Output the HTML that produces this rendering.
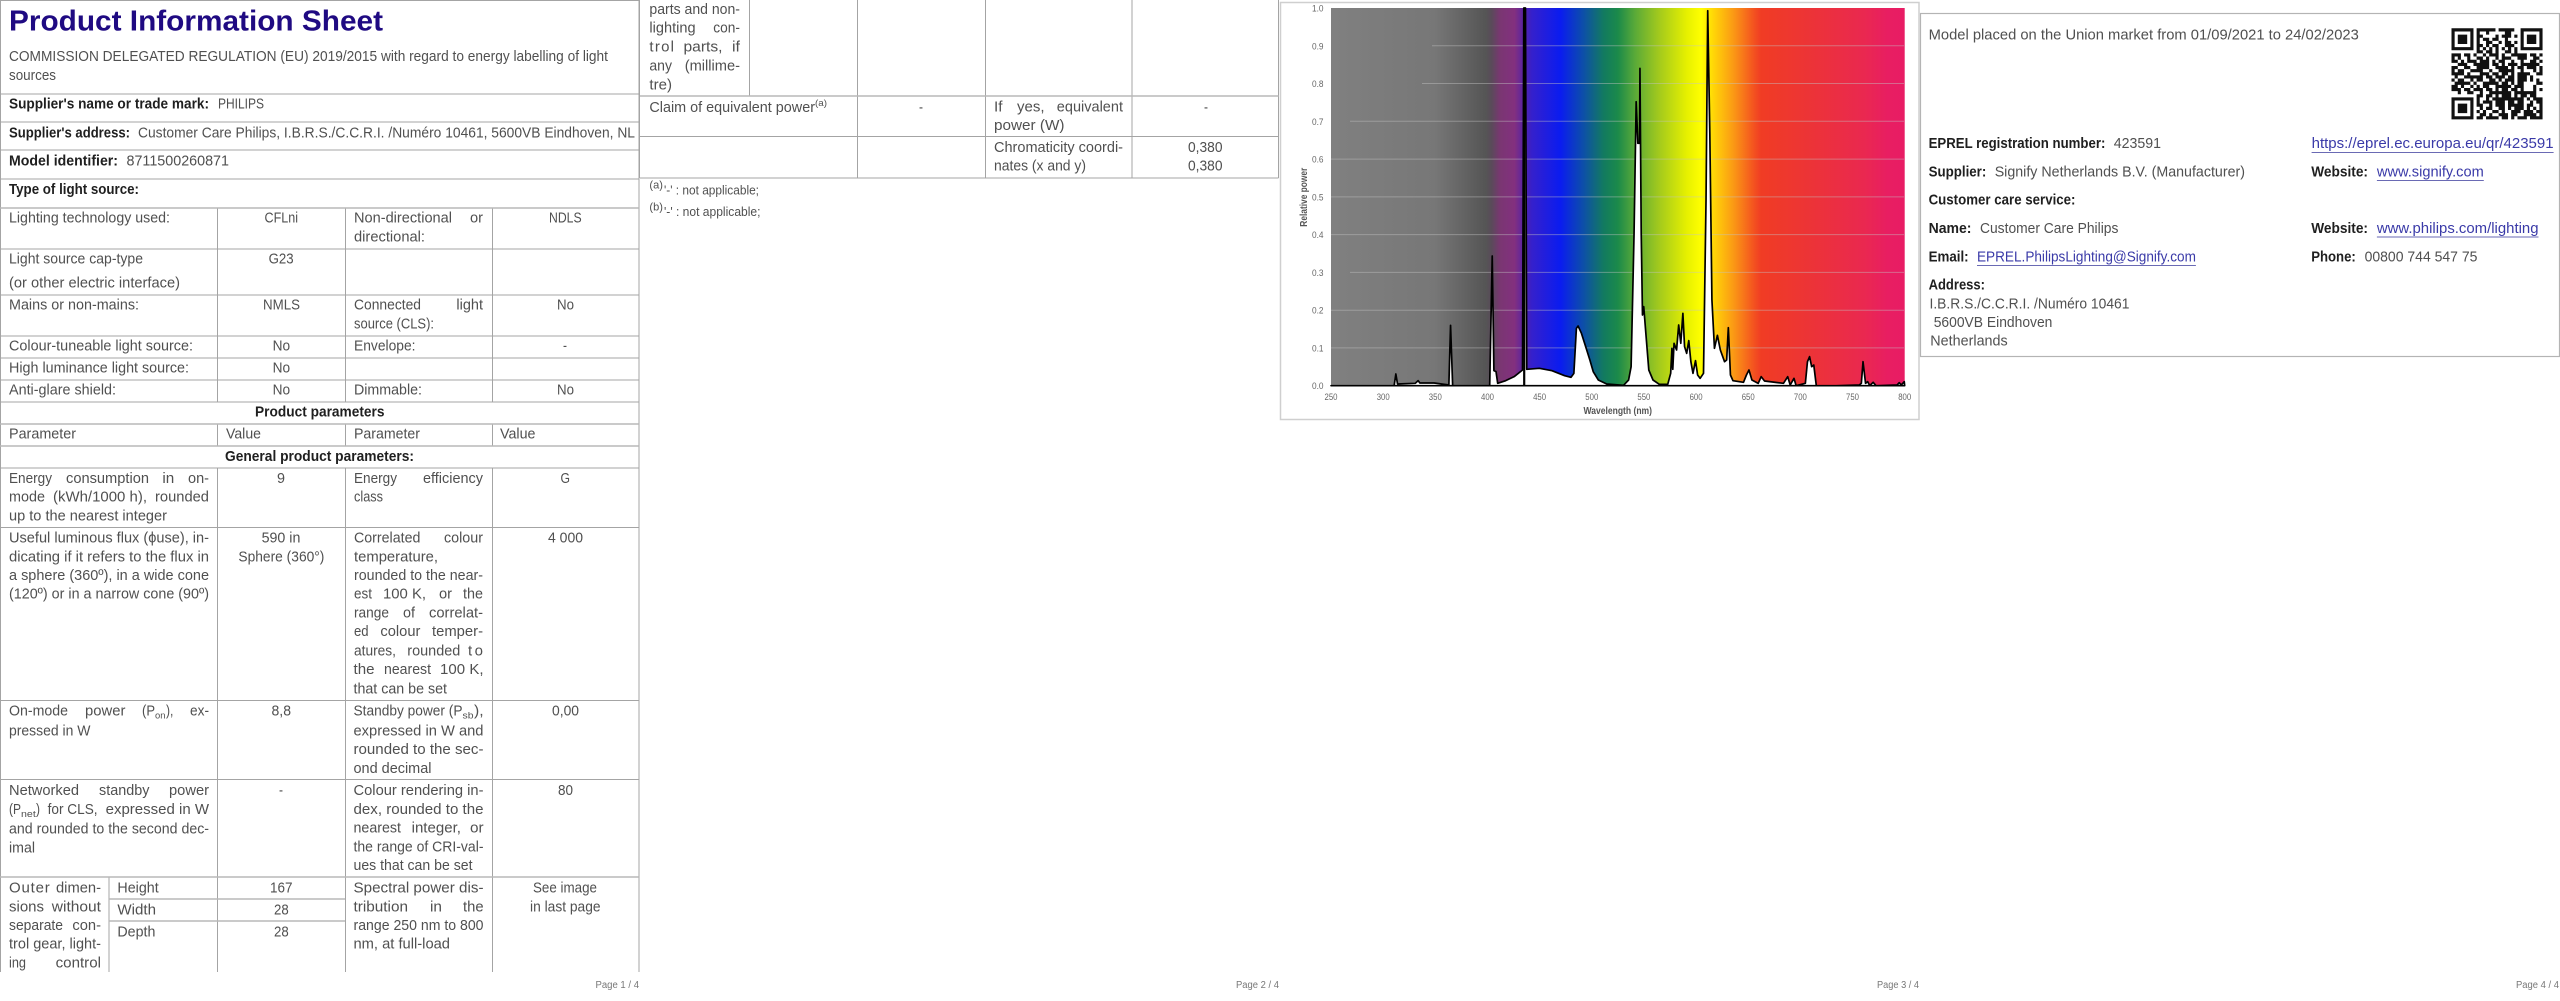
<!DOCTYPE html>
<html><head><meta charset="utf-8"><title>Product Information Sheet</title>
<style>
html,body{margin:0;padding:0;background:#fff;width:2560px;height:1001px;overflow:hidden}
svg{display:block;filter:blur(.35px)}
text{font-family:"Liberation Sans",sans-serif;font-size:15px;fill:#505050}
.b{font-weight:bold;fill:#1f1f1f}
.k{fill:#3a3aa8}
.s{font-size:9px;fill:#666}
.p{font-size:10px;fill:#777}
.m{font-size:10px;font-weight:bold;fill:#555}
</style></head><body>
<svg xmlns="http://www.w3.org/2000/svg" width="2560" height="1001" viewBox="0 0 2560 1001">
<defs>
<linearGradient id="sp" gradientUnits="userSpaceOnUse" x1="1331" y1="0" x2="1904.7" y2="0">
<stop offset="0" stop-color="#808080"/><stop offset=".18" stop-color="#777"/><stop offset=".27" stop-color="#555"/>
<stop offset=".28" stop-color="#5a4a5a"/><stop offset=".295" stop-color="#7a3672"/><stop offset=".32" stop-color="#83307f"/>
<stop offset=".335" stop-color="#5a24a0"/><stop offset=".35" stop-color="#3520cc"/><stop offset=".40" stop-color="#0a1cf0"/>
<stop offset=".44" stop-color="#0d4fa8"/><stop offset=".475" stop-color="#127a60"/><stop offset=".50" stop-color="#1b8a4a"/>
<stop offset=".53" stop-color="#5aaa38"/><stop offset=".57" stop-color="#a0c81e"/><stop offset=".62" stop-color="#e6f000"/>
<stop offset=".645" stop-color="#ffff00"/><stop offset=".67" stop-color="#ffd008"/><stop offset=".70" stop-color="#fb9c14"/>
<stop offset=".735" stop-color="#f4561f"/><stop offset=".75" stop-color="#f03c24"/><stop offset=".84" stop-color="#ec3338"/>
<stop offset=".93" stop-color="#ea2850"/><stop offset=".97" stop-color="#e81e62"/><stop offset="1" stop-color="#e81c64"/>
</linearGradient>
</defs>

<!-- table lines page 1 -->
<path fill="none" stroke="#a4a4a4" stroke-width="1" d="M.5 0V972M639 0V972M0 .5H639M0 94H639M0 122H639M0 150H639M0 179H639M0 249H639M0 295H639M0 336H639M0 358H639M0 380H639M0 402H639M0 468H639M0 527.5H639M0 700.5H639M0 779.5H639M217.5 208V402M345.5 208V402M492.5 208V402M217.5 424V446M345.5 424V446M492.5 424V446M217.5 468V972M345.5 468V972M492.5 468V972M109 877V972"/>
<path fill="none" stroke="#b8b8b8" stroke-width="1.6" d="M0 208H639M0 424H639M0 446H639M0 877H639M109 899H345M109 921H345"/>
<!-- table lines page 2 -->
<path fill="none" stroke="#a4a4a4" stroke-width="1" d="M639.5 0V178M749.5 0V96M857.5 0V178M985.5 0V178M1132 0V178M1278.5 0V178M640 136.5H1278.5M640 178H1278.5"/>
<path fill="none" stroke="#b8b8b8" stroke-width="1.6" d="M640 96H1278.5"/>

<!-- page 1 text -->
<text x="9" y="30.7" textLength="374" lengthAdjust="spacingAndGlyphs" style="font-size:29px;font-weight:bold;fill:#1f0a82">Product Information Sheet</text>
<text x="9" y="61" textLength="599" lengthAdjust="spacingAndGlyphs">COMMISSION DELEGATED REGULATION (EU) 2019/2015 with regard to energy labelling of light</text>
<text x="9" y="80" textLength="47" lengthAdjust="spacingAndGlyphs">sources</text>
<text class="b" x="9" y="108.7" textLength="200" lengthAdjust="spacingAndGlyphs">Supplier's name or trade mark:</text>
<text x="218" y="108.7" textLength="46" lengthAdjust="spacingAndGlyphs">PHILIPS</text>
<text class="b" x="9" y="137.3" textLength="121" lengthAdjust="spacingAndGlyphs">Supplier's address:</text>
<text x="138" y="137.3" textLength="497" lengthAdjust="spacingAndGlyphs">Customer Care Philips, I.B.R.S./C.C.R.I. /Numéro 10461, 5600VB Eindhoven, NL</text>
<text class="b" x="9" y="165.7" textLength="109" lengthAdjust="spacingAndGlyphs">Model identifier:</text>
<text x="126.5" y="165.7" textLength="102.5" lengthAdjust="spacingAndGlyphs">8711500260871</text>
<text class="b" x="9" y="194" textLength="130" lengthAdjust="spacingAndGlyphs">Type of light source:</text>

<text x="9" y="222.7" textLength="161" lengthAdjust="spacingAndGlyphs">Lighting technology used:</text>
<text x="264.5" y="222.7" textLength="33.5" lengthAdjust="spacingAndGlyphs">CFLni</text>
<text x="354" y="222.7" textLength="98" lengthAdjust="spacingAndGlyphs">Non-directional</text>
<text x="470" y="222.7" textLength="13" lengthAdjust="spacingAndGlyphs">or</text>
<text x="354" y="241.7" textLength="71" lengthAdjust="spacingAndGlyphs">directional:</text>
<text x="549" y="222.7" textLength="32.6" lengthAdjust="spacingAndGlyphs">NDLS</text>

<text x="9" y="263.3" textLength="134" lengthAdjust="spacingAndGlyphs">Light source cap-type</text>
<text x="268.6" y="263.3" textLength="25" lengthAdjust="spacingAndGlyphs">G23</text>
<text x="9" y="287.3" textLength="171" lengthAdjust="spacingAndGlyphs">(or other electric interface)</text>

<text x="9" y="309.7" textLength="130" lengthAdjust="spacingAndGlyphs">Mains or non-mains:</text>
<text x="263" y="309.7" textLength="37" lengthAdjust="spacingAndGlyphs">NMLS</text>
<text x="354" y="309.7" textLength="67" lengthAdjust="spacingAndGlyphs">Connected</text>
<text x="456.4" y="309.7" textLength="26.6" lengthAdjust="spacingAndGlyphs">light</text>
<text x="354" y="328.3" textLength="80" lengthAdjust="spacingAndGlyphs">source (CLS):</text>
<text x="557" y="309.7" textLength="17" lengthAdjust="spacingAndGlyphs">No</text>

<text x="9" y="350.7" textLength="184" lengthAdjust="spacingAndGlyphs">Colour-tuneable light source:</text>
<text x="272.6" y="350.7" textLength="17.5" lengthAdjust="spacingAndGlyphs">No</text>
<text x="354" y="350.7" textLength="61.5" lengthAdjust="spacingAndGlyphs">Envelope:</text>
<text x="563" y="350.7" textLength="4" lengthAdjust="spacingAndGlyphs">-</text>
<text x="9" y="372.7" textLength="180" lengthAdjust="spacingAndGlyphs">High luminance light source:</text>
<text x="272.6" y="372.7" textLength="17.5" lengthAdjust="spacingAndGlyphs">No</text>
<text x="9" y="394.7" textLength="107" lengthAdjust="spacingAndGlyphs">Anti-glare shield:</text>
<text x="272.6" y="394.7" textLength="17.5" lengthAdjust="spacingAndGlyphs">No</text>
<text x="354" y="394.7" textLength="68" lengthAdjust="spacingAndGlyphs">Dimmable:</text>
<text x="557" y="394.7" textLength="17" lengthAdjust="spacingAndGlyphs">No</text>

<text class="b" x="255" y="416.7" textLength="129.5" lengthAdjust="spacingAndGlyphs">Product parameters</text>
<text x="9" y="438.7" textLength="67" lengthAdjust="spacingAndGlyphs">Parameter</text>
<text x="226" y="438.7" textLength="35" lengthAdjust="spacingAndGlyphs">Value</text>
<text x="354" y="438.7" textLength="66" lengthAdjust="spacingAndGlyphs">Parameter</text>
<text x="500" y="438.7" textLength="35.5" lengthAdjust="spacingAndGlyphs">Value</text>
<text class="b" x="225" y="461" textLength="189" lengthAdjust="spacingAndGlyphs">General product parameters:</text>

<text x="9" y="483" textLength="43" lengthAdjust="spacingAndGlyphs">Energy</text>
<text x="66" y="483" textLength="83" lengthAdjust="spacingAndGlyphs">consumption</text>
<text x="162.4" y="483" textLength="11.9" lengthAdjust="spacingAndGlyphs">in</text>
<text x="188" y="483" textLength="21" lengthAdjust="spacingAndGlyphs">on-</text>
<text x="9" y="501.7" textLength="36" lengthAdjust="spacingAndGlyphs">mode</text>
<text x="53" y="501.7" textLength="94" lengthAdjust="spacingAndGlyphs">(kWh/1000 h),</text>
<text x="155" y="501.7" textLength="54" lengthAdjust="spacingAndGlyphs">rounded</text>
<text x="9" y="520.3" textLength="158" lengthAdjust="spacingAndGlyphs">up to the nearest integer</text>
<text x="277" y="483" textLength="8" lengthAdjust="spacingAndGlyphs">9</text>
<text x="354" y="483" textLength="43" lengthAdjust="spacingAndGlyphs">Energy</text>
<text x="423" y="483" textLength="60" lengthAdjust="spacingAndGlyphs">efficiency</text>
<text x="354" y="501.7" textLength="29" lengthAdjust="spacingAndGlyphs">class</text>
<text x="560.5" y="483" textLength="9.5" lengthAdjust="spacingAndGlyphs">G</text>

<text x="9" y="542.7" textLength="200" lengthAdjust="spacingAndGlyphs">Useful luminous flux (ϕuse), in-</text>
<text x="9" y="561.3" textLength="200" lengthAdjust="spacingAndGlyphs">dicating if it refers to the flux in</text>
<text x="9" y="580" textLength="200" lengthAdjust="spacingAndGlyphs">a sphere (360º), in a wide cone</text>
<text x="9" y="598.7" textLength="200" lengthAdjust="spacingAndGlyphs">(120º) or in a narrow cone (90º)</text>
<text x="261.6" y="542.7" textLength="38.8" lengthAdjust="spacingAndGlyphs">590 in</text>
<text x="238.4" y="561.3" textLength="86" lengthAdjust="spacingAndGlyphs">Sphere (360°)</text>
<text x="354" y="542.7" textLength="66.4" lengthAdjust="spacingAndGlyphs">Correlated</text>
<text x="444" y="542.7" textLength="39" lengthAdjust="spacingAndGlyphs">colour</text>
<text x="354" y="561.3" textLength="84" lengthAdjust="spacingAndGlyphs">temperature,</text>
<text x="354" y="580" textLength="129" lengthAdjust="spacingAndGlyphs">rounded to the near-</text>
<text x="354" y="598.7" textLength="18" lengthAdjust="spacingAndGlyphs">est</text>
<text x="383" y="598.7" textLength="43" lengthAdjust="spacingAndGlyphs">100 K,</text>
<text x="439" y="598.7" textLength="13" lengthAdjust="spacingAndGlyphs">or</text>
<text x="463" y="598.7" textLength="20" lengthAdjust="spacingAndGlyphs">the</text>
<text x="354" y="617.3" textLength="35" lengthAdjust="spacingAndGlyphs">range</text>
<text x="403" y="617.3" textLength="12" lengthAdjust="spacingAndGlyphs">of</text>
<text x="429" y="617.3" textLength="54" lengthAdjust="spacingAndGlyphs">correlat-</text>
<text x="354" y="636" textLength="14.6" lengthAdjust="spacingAndGlyphs">ed</text>
<text x="380.4" y="636" textLength="40" lengthAdjust="spacingAndGlyphs">colour</text>
<text x="432" y="636" textLength="51" lengthAdjust="spacingAndGlyphs">temper-</text>
<text x="354" y="655.3" textLength="42" lengthAdjust="spacingAndGlyphs">atures,</text>
<text x="407.3" y="655.3" textLength="53" lengthAdjust="spacingAndGlyphs">rounded</text>
<text x="468" y="655.3" textLength="15" lengthAdjust="spacing">to</text>
<text x="353.5" y="674" textLength="21" lengthAdjust="spacingAndGlyphs">the</text>
<text x="384" y="674" textLength="47" lengthAdjust="spacingAndGlyphs">nearest</text>
<text x="440" y="674" textLength="43.6" lengthAdjust="spacing">100 K,</text>
<text x="353.5" y="693.3" textLength="93.5" lengthAdjust="spacingAndGlyphs">that can be set</text>
<text x="548" y="542.7" textLength="35" lengthAdjust="spacingAndGlyphs">4 000</text>

<text x="9" y="715.3" textLength="59" lengthAdjust="spacingAndGlyphs">On-mode</text>
<text x="85" y="715.3" textLength="40.4" lengthAdjust="spacingAndGlyphs">power</text>
<text x="142" y="715.3" textLength="13" lengthAdjust="spacingAndGlyphs">(P</text>
<text x="155" y="718.3" textLength="10.5" lengthAdjust="spacingAndGlyphs" style="font-size:9.5px">on</text>
<text x="166" y="715.3" textLength="7.4" lengthAdjust="spacingAndGlyphs">),</text>
<text x="190" y="715.3" textLength="19" lengthAdjust="spacingAndGlyphs">ex-</text>
<text x="9" y="735.3" textLength="81.5" lengthAdjust="spacingAndGlyphs">pressed in W</text>
<text x="271.5" y="715.3" textLength="19.5" lengthAdjust="spacingAndGlyphs">8,8</text>
<text x="353.5" y="715.3" textLength="109" lengthAdjust="spacingAndGlyphs">Standby power (P</text>
<text x="462.5" y="718.3" textLength="11" lengthAdjust="spacingAndGlyphs" style="font-size:9.5px">sb</text>
<text x="474" y="715.3" textLength="9.6" lengthAdjust="spacingAndGlyphs">),</text>
<text x="353.5" y="735.3" textLength="130" lengthAdjust="spacingAndGlyphs">expressed in W and</text>
<text x="353.5" y="754" textLength="130" lengthAdjust="spacingAndGlyphs">rounded to the sec-</text>
<text x="353.5" y="773" textLength="78" lengthAdjust="spacingAndGlyphs">ond decimal</text>
<text x="552" y="715.3" textLength="27" lengthAdjust="spacingAndGlyphs">0,00</text>

<text x="9" y="795" textLength="70" lengthAdjust="spacingAndGlyphs">Networked</text>
<text x="99" y="795" textLength="50.4" lengthAdjust="spacingAndGlyphs">standby</text>
<text x="169" y="795" textLength="40" lengthAdjust="spacingAndGlyphs">power</text>
<text x="9" y="814" textLength="12" lengthAdjust="spacingAndGlyphs">(P</text>
<text x="21" y="817" textLength="14.8" lengthAdjust="spacingAndGlyphs" style="font-size:9.5px">net</text>
<text x="36" y="814" textLength="4" lengthAdjust="spacingAndGlyphs">)</text>
<text x="47.6" y="814" textLength="50" lengthAdjust="spacingAndGlyphs">for CLS,</text>
<text x="105.6" y="814" textLength="103.4" lengthAdjust="spacingAndGlyphs">expressed in W</text>
<text x="9" y="833.3" textLength="200" lengthAdjust="spacingAndGlyphs">and rounded to the second dec-</text>
<text x="9" y="852.3" textLength="26" lengthAdjust="spacingAndGlyphs">imal</text>
<text x="279" y="795" textLength="4" lengthAdjust="spacingAndGlyphs">-</text>
<text x="353.5" y="795" textLength="130" lengthAdjust="spacingAndGlyphs">Colour rendering in-</text>
<text x="353.5" y="814" textLength="130" lengthAdjust="spacingAndGlyphs">dex, rounded to the</text>
<text x="353.5" y="832.7" textLength="47.5" lengthAdjust="spacingAndGlyphs">nearest</text>
<text x="411.6" y="832.7" textLength="49.4" lengthAdjust="spacingAndGlyphs">integer,</text>
<text x="470" y="832.7" textLength="13.6" lengthAdjust="spacingAndGlyphs">or</text>
<text x="353.5" y="851.3" textLength="130" lengthAdjust="spacingAndGlyphs">the range of CRI-val-</text>
<text x="353.5" y="870" textLength="119" lengthAdjust="spacingAndGlyphs">ues that can be set</text>
<text x="558" y="795" textLength="15" lengthAdjust="spacingAndGlyphs">80</text>

<text x="9" y="892.3" textLength="40.7" lengthAdjust="spacing">Outer</text>
<text x="56" y="892.3" textLength="45" lengthAdjust="spacingAndGlyphs">dimen-</text>
<text x="9" y="911.3" textLength="35" lengthAdjust="spacingAndGlyphs">sions</text>
<text x="51.8" y="911.3" textLength="49.2" lengthAdjust="spacingAndGlyphs">without</text>
<text x="9" y="930" textLength="54" lengthAdjust="spacingAndGlyphs">separate</text>
<text x="72.4" y="930" textLength="28.6" lengthAdjust="spacingAndGlyphs">con-</text>
<text x="9" y="948.7" textLength="92" lengthAdjust="spacingAndGlyphs">trol gear, light-</text>
<text x="9" y="967.7" textLength="17" lengthAdjust="spacingAndGlyphs">ing</text>
<text x="55.6" y="967.7" textLength="45.4" lengthAdjust="spacingAndGlyphs">control</text>
<text x="117.4" y="892.3" textLength="41.3" lengthAdjust="spacingAndGlyphs">Height</text>
<text x="117.4" y="914.3" textLength="38.6" lengthAdjust="spacingAndGlyphs">Width</text>
<text x="117.4" y="936.3" textLength="38" lengthAdjust="spacingAndGlyphs">Depth</text>
<text x="270" y="892.3" textLength="22.5" lengthAdjust="spacingAndGlyphs">167</text>
<text x="274" y="914.3" textLength="14.7" lengthAdjust="spacingAndGlyphs">28</text>
<text x="274" y="936.3" textLength="14.7" lengthAdjust="spacingAndGlyphs">28</text>
<text x="353.5" y="892.3" textLength="130" lengthAdjust="spacingAndGlyphs">Spectral power dis-</text>
<text x="353.5" y="911.3" textLength="54.5" lengthAdjust="spacingAndGlyphs">tribution</text>
<text x="430" y="911.3" textLength="12" lengthAdjust="spacingAndGlyphs">in</text>
<text x="463" y="911.3" textLength="20.6" lengthAdjust="spacingAndGlyphs">the</text>
<text x="353.5" y="930" textLength="130" lengthAdjust="spacingAndGlyphs">range 250 nm to 800</text>
<text x="353.5" y="948.7" textLength="96.5" lengthAdjust="spacingAndGlyphs">nm, at full-load</text>
<text x="533" y="892.3" textLength="64" lengthAdjust="spacingAndGlyphs">See image</text>
<text x="530" y="911.3" textLength="70.6" lengthAdjust="spacingAndGlyphs">in last page</text>
<text class="p" x="595.5" y="988" textLength="43.5" lengthAdjust="spacingAndGlyphs">Page 1 / 4</text>

<!-- page 2 text -->
<text x="649.4" y="14" textLength="90.6" lengthAdjust="spacingAndGlyphs">parts and non-</text>
<text x="649.4" y="32.7" textLength="46.2" lengthAdjust="spacingAndGlyphs">lighting</text>
<text x="713.3" y="32.7" textLength="26.7" lengthAdjust="spacingAndGlyphs">con-</text>
<text x="649.4" y="51.3" textLength="24.6" lengthAdjust="spacing">trol</text>
<text x="683.5" y="51.3" textLength="39" lengthAdjust="spacingAndGlyphs">parts,</text>
<text x="732" y="51.3" textLength="8" lengthAdjust="spacingAndGlyphs">if</text>
<text x="649.4" y="70.3" textLength="22.6" lengthAdjust="spacingAndGlyphs">any</text>
<text x="684.7" y="70.3" textLength="55.3" lengthAdjust="spacingAndGlyphs">(millime-</text>
<text x="649.4" y="89.3" textLength="22.6" lengthAdjust="spacingAndGlyphs">tre)</text>
<text x="649.4" y="112" textLength="165.6" lengthAdjust="spacingAndGlyphs">Claim of equivalent power</text>
<text x="815" y="106" textLength="12" lengthAdjust="spacingAndGlyphs" style="font-size:9.5px">(a)</text>
<text x="919" y="112" textLength="4" lengthAdjust="spacingAndGlyphs">-</text>
<text x="994" y="111.3" textLength="8.5" lengthAdjust="spacingAndGlyphs">If</text>
<text x="1017" y="111.3" textLength="27.6" lengthAdjust="spacingAndGlyphs">yes,</text>
<text x="1056.8" y="111.3" textLength="66.2" lengthAdjust="spacingAndGlyphs">equivalent</text>
<text x="994" y="130" textLength="70.5" lengthAdjust="spacingAndGlyphs">power (W)</text>
<text x="1204" y="112" textLength="4" lengthAdjust="spacingAndGlyphs">-</text>
<text x="994" y="152" textLength="129" lengthAdjust="spacingAndGlyphs">Chromaticity coordi-</text>
<text x="994" y="170.7" textLength="92" lengthAdjust="spacingAndGlyphs">nates (x and y)</text>
<text x="1188" y="152" textLength="34.5" lengthAdjust="spacingAndGlyphs">0,380</text>
<text x="1188" y="170.7" textLength="34.5" lengthAdjust="spacingAndGlyphs">0,380</text>
<text x="649.4" y="188.7" textLength="13.5" lengthAdjust="spacingAndGlyphs" style="font-size:11px">(a)</text>
<text x="664" y="194.3" textLength="95" lengthAdjust="spacingAndGlyphs" style="font-size:12.5px">'-' : not applicable;</text>
<text x="649.4" y="210.7" textLength="13.5" lengthAdjust="spacingAndGlyphs" style="font-size:11px">(b)</text>
<text x="664" y="216" textLength="96.5" lengthAdjust="spacingAndGlyphs" style="font-size:12.5px">'-' : not applicable;</text>
<text class="p" x="1236" y="988" textLength="43" lengthAdjust="spacingAndGlyphs">Page 2 / 4</text>

<!-- page 3 chart -->
<rect x="1280.5" y="2.5" width="638.5" height="417" fill="#fff" stroke="#cfcfcf" stroke-width="1.5"/>
<rect x="1331" y="8" width="573.7" height="377.7" fill="url(#sp)"/>
<path fill="none" stroke="#c4c4c4" stroke-opacity=".45" stroke-width="1" d="M1432 45.8H1904M1422 83.5H1904M1350 121.3H1904M1331 159.1H1904M1331 196.9H1904M1331 234.6H1904M1350 272.4H1904M1331 310.2H1904M1331 347.9H1904"/>
<g transform="translate(1270 0) scale(.42088 .33333)">
<path fill="#fff" stroke="#000" stroke-width="1.7" stroke-linejoin="round" vector-effect="non-scaling-stroke" d="M145 1157L295 1157L299 1122L303 1152L345 1150L352 1142L356 1149L390 1149L425 1155L429 976L434 1157L522 1157L528 768L532 1112L537 1115L541 1150L560 1142L580 1130L600 1110L603 24L607 24L610 1108L640 1105L670 1112L700 1127L715 1132L722 1120L728 985L732 978L740 1000L750 1040L760 1080L768 1115L780 1140L800 1152L840 1156L852 1140L858 1100L865 700L870 305L874 430L878 430L879 205L882 700L885 945L888 920L893 1000L900 1110L910 1140L925 1153L945 1153L952 1120L955 1045L957 1108L960 1030L966 1050L971 975L976 1030L981 940L985 1040L990 1060L995 1022L1000 1085L1005 1120L1011 1082L1016 1125L1022 1135L1030 1120L1036 600L1040 32L1045 400L1050 900L1056 1045L1063 1006L1070 1050L1080 1085L1085 1080L1089 983L1094 1125L1100 1142L1125 1147L1132 1125L1138 1110L1145 1140L1160 1150L1167 1130L1175 1143L1220 1150L1230 1130L1236 1155L1245 1135L1250 1157L1272 1150L1277 1085L1282 1070L1287 1100L1292 1095L1298 1157L1345 1157L1400 1155L1405 1150L1409 1085L1415 1150L1420 1145L1425 1157L1433 1147L1440 1157L1490 1155L1495 1148L1500 1155L1507 1145L1508 1157Z"/>
</g>
<path fill="none" stroke="#000" stroke-width="2.2" d="M1524.2 8V385"/>
<g>
<text class="s" x="1312" y="11.5" textLength="11.5" lengthAdjust="spacingAndGlyphs">1.0</text>
<text class="s" x="1312" y="49.3" textLength="11.5" lengthAdjust="spacingAndGlyphs">0.9</text>
<text class="s" x="1312" y="87" textLength="11.5" lengthAdjust="spacingAndGlyphs">0.8</text>
<text class="s" x="1312" y="124.8" textLength="11.5" lengthAdjust="spacingAndGlyphs">0.7</text>
<text class="s" x="1312" y="162.6" textLength="11.5" lengthAdjust="spacingAndGlyphs">0.6</text>
<text class="s" x="1312" y="200.4" textLength="11.5" lengthAdjust="spacingAndGlyphs">0.5</text>
<text class="s" x="1312" y="238.1" textLength="11.5" lengthAdjust="spacingAndGlyphs">0.4</text>
<text class="s" x="1312" y="275.9" textLength="11.5" lengthAdjust="spacingAndGlyphs">0.3</text>
<text class="s" x="1312" y="313.7" textLength="11.5" lengthAdjust="spacingAndGlyphs">0.2</text>
<text class="s" x="1312" y="351.4" textLength="11.5" lengthAdjust="spacingAndGlyphs">0.1</text>
<text class="s" x="1312" y="389.2" textLength="11.5" lengthAdjust="spacingAndGlyphs">0.0</text>
<text class="s" x="1324.5" y="400" textLength="13" lengthAdjust="spacingAndGlyphs">250</text>
<text class="s" x="1376.7" y="400" textLength="13" lengthAdjust="spacingAndGlyphs">300</text>
<text class="s" x="1428.8" y="400" textLength="13" lengthAdjust="spacingAndGlyphs">350</text>
<text class="s" x="1481" y="400" textLength="13" lengthAdjust="spacingAndGlyphs">400</text>
<text class="s" x="1533.1" y="400" textLength="13" lengthAdjust="spacingAndGlyphs">450</text>
<text class="s" x="1585.3" y="400" textLength="13" lengthAdjust="spacingAndGlyphs">500</text>
<text class="s" x="1637.4" y="400" textLength="13" lengthAdjust="spacingAndGlyphs">550</text>
<text class="s" x="1689.6" y="400" textLength="13" lengthAdjust="spacingAndGlyphs">600</text>
<text class="s" x="1741.7" y="400" textLength="13" lengthAdjust="spacingAndGlyphs">650</text>
<text class="s" x="1793.9" y="400" textLength="13" lengthAdjust="spacingAndGlyphs">700</text>
<text class="s" x="1846" y="400" textLength="13" lengthAdjust="spacingAndGlyphs">750</text>
<text class="s" x="1898.2" y="400" textLength="13" lengthAdjust="spacingAndGlyphs">800</text>
<text class="m" x="1583.5" y="414" textLength="68.5" lengthAdjust="spacingAndGlyphs">Wavelength (nm)</text>
<text class="m" transform="translate(1307 226.7) rotate(-90)" x="0" y="0" textLength="59" lengthAdjust="spacingAndGlyphs">Relative power</text>
</g>
<text class="p" x="1877" y="988" textLength="42" lengthAdjust="spacingAndGlyphs">Page 3 / 4</text>

<!-- page 4 -->
<rect x="1920.5" y="13.5" width="639" height="343" fill="none" stroke="#b4b4b4" stroke-width="1.2"/>
<text x="1928.6" y="39.3" textLength="430.2" lengthAdjust="spacingAndGlyphs">Model placed on the Union market from 01/09/2021 to 24/02/2023</text>
<text class="b" x="1928.6" y="148" textLength="176.8" lengthAdjust="spacingAndGlyphs">EPREL registration number:</text>
<text x="2113.8" y="148" textLength="47.2" lengthAdjust="spacingAndGlyphs">423591</text>
<text class="k" x="2311.6" y="148" textLength="242" lengthAdjust="spacingAndGlyphs">https://eprel.ec.europa.eu/qr/423591</text>
<text class="b" x="1928.6" y="176.3" textLength="57.7" lengthAdjust="spacingAndGlyphs">Supplier:</text>
<text x="1994.7" y="176.3" textLength="250.3" lengthAdjust="spacingAndGlyphs">Signify Netherlands B.V. (Manufacturer)</text>
<text class="b" x="2311.2" y="176.3" textLength="56.8" lengthAdjust="spacingAndGlyphs">Website:</text>
<text class="k" x="2376.9" y="176.3" textLength="106.9" lengthAdjust="spacingAndGlyphs">www.signify.com</text>
<text class="b" x="1928.6" y="204.7" textLength="146.9" lengthAdjust="spacingAndGlyphs">Customer care service:</text>
<text class="b" x="1928.6" y="233" textLength="42.9" lengthAdjust="spacingAndGlyphs">Name:</text>
<text x="1980" y="233" textLength="138.4" lengthAdjust="spacingAndGlyphs">Customer Care Philips</text>
<text class="b" x="2311.2" y="233" textLength="56.8" lengthAdjust="spacingAndGlyphs">Website:</text>
<text class="k" x="2376.9" y="233" textLength="161.6" lengthAdjust="spacingAndGlyphs">www.philips.com/lighting</text>
<text class="b" x="1928.6" y="261.3" textLength="40" lengthAdjust="spacingAndGlyphs">Email:</text>
<text class="k" x="1977" y="261.3" textLength="218.9" lengthAdjust="spacingAndGlyphs">EPREL.PhilipsLighting@Signify.com</text>
<text class="b" x="2311.2" y="261.3" textLength="44.6" lengthAdjust="spacingAndGlyphs">Phone:</text>
<text x="2364.6" y="261.3" textLength="112.8" lengthAdjust="spacingAndGlyphs">00800 744 547 75</text>
<text class="b" x="1928.6" y="289.7" textLength="56.4" lengthAdjust="spacingAndGlyphs">Address:</text>
<text x="1929.5" y="308.3" textLength="199.9" lengthAdjust="spacingAndGlyphs">I.B.R.S./C.C.R.I. /Numéro 10461</text>
<text x="1933.7" y="327" textLength="118.7" lengthAdjust="spacingAndGlyphs">5600VB Eindhoven</text>
<text x="1930.3" y="345.7" textLength="77.4" lengthAdjust="spacingAndGlyphs">Netherlands</text>
<path fill="none" stroke="#6a6ab4" stroke-width="1" d="M2311.6 152.5H2553.6M2376.9 180.5H2483.8M2376.9 237H2538.5M1977 265.5H2195.9"/>
<text class="p" x="2516" y="988" textLength="43" lengthAdjust="spacingAndGlyphs">Page 4 / 4</text>

<!-- QR -->
<g transform="translate(2451.5 28.3) scale(3.14)">
<path fill="none" stroke="#111" stroke-width="1" d="M.5 .5h6v6h-6zM22.5 .5h6v6h-6zM.5 22.5h6v6h-6z"/>
<path fill="#111" d="M2 2h3v3h-3zM24 2h3v3h-3zM2 24h3v3h-3z"/>
<path fill="none" stroke="#111" stroke-width="1" d="M8 .5h6M15 .5h5
M8 1.5h1M11 1.5h1M17 1.5h2
M8 2.5h2M14 2.5h1M16 2.5h3M20 2.5h1
M8 3.5h1M10 3.5h2M13 3.5h2M17 3.5h1
M8 4.5h1M11 4.5h2M15 4.5h1M17 4.5h2M20 4.5h1
M8 5.5h2M11 5.5h1M13 5.5h2M17 5.5h3
M8 6.5h1M10 6.5h1M12 6.5h1M14 6.5h1M16 6.5h1M18 6.5h1M20 6.5h1
M8 7.5h2M11 7.5h2M14 7.5h1M17 7.5h2M20 7.5h1
M0 8.5h3M4 8.5h2M7 8.5h1M10 8.5h1M12 8.5h3M16 8.5h1M19 8.5h2M21 8.5h2M23 8.5h1M25 8.5h2M28 8.5h1
M0 9.5h1M2 9.5h1M5 9.5h1M8 9.5h2M11 9.5h1M14 9.5h1M16 9.5h3M21 9.5h1M22 9.5h2M26 9.5h2
M0 10.5h2M3 10.5h1M5 10.5h2M7 10.5h1M9 10.5h3M13 10.5h1M15 10.5h2M19 10.5h1M22 10.5h1M25 10.5h2M28 10.5h1
M2 11.5h3M7 11.5h5M13 11.5h2M16 11.5h1M18 11.5h3M22 11.5h1M23 11.5h2M25 11.5h3
M0 12.5h2M4 12.5h2M8 12.5h4M14 12.5h1M15 12.5h3M19 12.5h1M21 12.5h2M24 12.5h3M28 12.5h1
M0 13.5h1M2 13.5h2M6 13.5h1M7 13.5h3M12 13.5h1M15 13.5h5M22 13.5h1M26 13.5h1M28 13.5h1
M0 14.5h4M5 14.5h1M9 14.5h3M13 14.5h2M16 14.5h2M19 14.5h1M21 14.5h3M24 14.5h1M27 14.5h2
M1 15.5h1M4 15.5h4M8 15.5h2M11 15.5h2M14 15.5h1M15 15.5h2M18 15.5h2M21 15.5h1M22 15.5h2M25 15.5h1
M0 16.5h1M2 16.5h2M6 16.5h1M8 16.5h2M12 16.5h2M15 16.5h1M17 16.5h3M21 16.5h1M22 16.5h2M25 16.5h1M27 16.5h1
M1 17.5h5M7 17.5h1M10 17.5h4M14 17.5h1M16 17.5h2M19 17.5h1M21 17.5h2M27 17.5h2
M0 18.5h2M3 18.5h1M6 18.5h1M8 18.5h1M10 18.5h2M14 18.5h1M15 18.5h4M20 18.5h1M21 18.5h2M26 18.5h1
M0 19.5h3M4 19.5h2M7 19.5h3M11 19.5h2M14 19.5h1M16 19.5h2M19 19.5h2M22 19.5h1M26 19.5h1M28 19.5h1
M2 20.5h1M5 20.5h2M9 20.5h1M12 20.5h2M14 20.5h5M20 20.5h1M21 20.5h6
M8 21.5h2M11 21.5h2M14 21.5h1M16 21.5h3M20 21.5h1M22 21.5h2M25 21.5h2
M8 22.5h1M11 22.5h1M13 22.5h2M15 22.5h5M20 22.5h2M22 22.5h1M24 22.5h1M26 22.5h3
M8 23.5h1M10 23.5h3M14 23.5h2M16 23.5h1M18 23.5h2M21 23.5h2M25 23.5h1M27 23.5h2
M8 24.5h2M12 24.5h1M14 24.5h3M18 24.5h5M24 24.5h2M28 24.5h1
M9 25.5h1M11 25.5h2M15 25.5h2M18 25.5h1M20 25.5h3M24 25.5h1M26 25.5h1M28 25.5h1
M8 26.5h1M10 26.5h1M13 26.5h2M16 26.5h1M19 26.5h3M23 26.5h3M27 26.5h2
M9 27.5h2M12 27.5h1M15 27.5h3M19 27.5h2M23 27.5h4M28 27.5h1
M8 28.5h2M11 28.5h4M16 28.5h2M19 28.5h1M21 28.5h3M25 28.5h4"/>
</g>
</svg>
</body></html>
